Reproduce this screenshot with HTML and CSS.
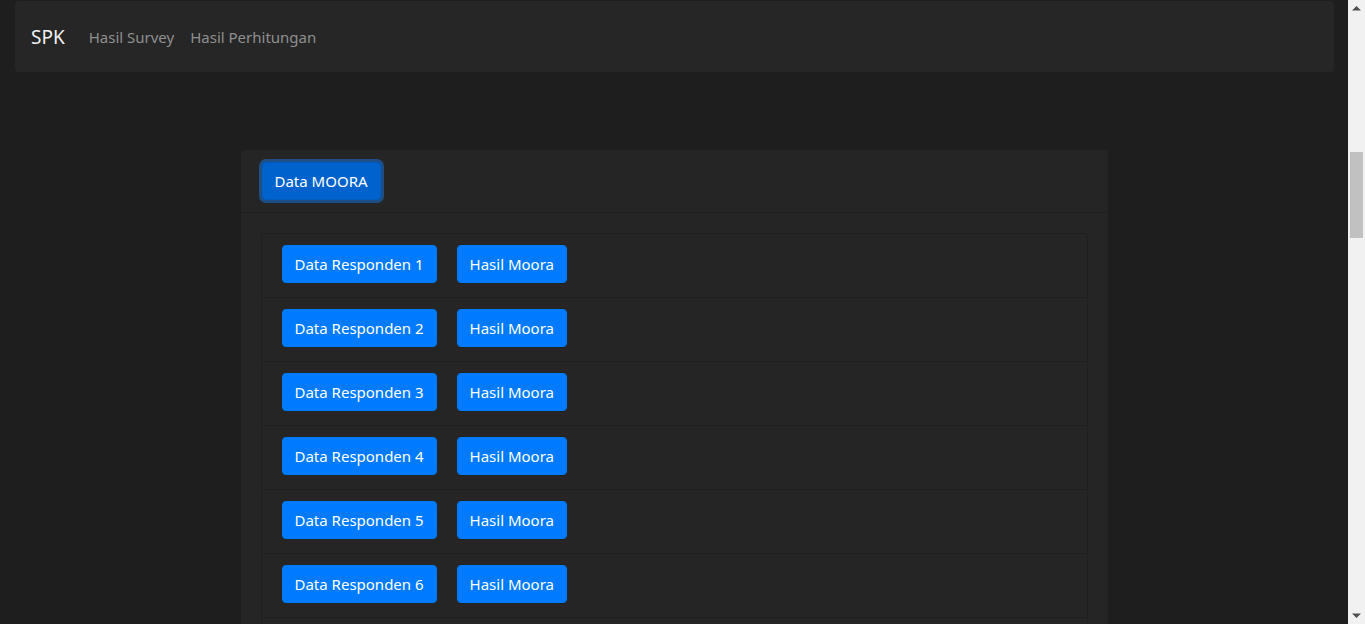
FILE: index.html
```html
<!DOCTYPE html>
<html lang="id">
<head>
<meta charset="utf-8">
<title>SPK</title>
<link rel="stylesheet" href="styles.css">
</head>
<body>
<nav class="navbar">
  <a class="brand" href="#">SPK</a>
  <a class="nav-link" href="#">Hasil Survey</a>
  <a class="nav-link" href="#">Hasil Perhitungan</a>
</nav>
<main class="main">
  <section class="card">
    <div class="card-header">
      <button class="btn btn-active">Data MOORA</button>
    </div>
    <div class="card-body">
      <ul class="list">
        <li class="item"><button class="btn">Data Responden 1</button><button class="btn">Hasil Moora</button></li>
        <li class="item"><button class="btn">Data Responden 2</button><button class="btn">Hasil Moora</button></li>
        <li class="item"><button class="btn">Data Responden 3</button><button class="btn">Hasil Moora</button></li>
        <li class="item"><button class="btn">Data Responden 4</button><button class="btn">Hasil Moora</button></li>
        <li class="item"><button class="btn">Data Responden 5</button><button class="btn">Hasil Moora</button></li>
        <li class="item"><button class="btn">Data Responden 6</button><button class="btn">Hasil Moora</button></li>
        <li class="item"><button class="btn">Data Responden 7</button><button class="btn">Hasil Moora</button></li>
        <li class="item"><button class="btn">Data Responden 8</button><button class="btn">Hasil Moora</button></li>
      </ul>
    </div>
  </section>
</main>
<div class="scrollbar" aria-hidden="true">
  <svg class="arrow" width="17" height="17" viewBox="0 0 17 17"><polygon points="8.5,6 13,10.5 4,10.5" fill="#505050"/></svg>
  <div class="track"><div class="thumb"></div></div>
  <svg class="arrow" width="17" height="17" viewBox="0 0 17 17"><polygon points="4,6.5 13,6.5 8.5,11" fill="#505050"/></svg>
</div>
</body>
</html>
```
FILE: styles.css
```css
html, body {
  margin: 0;
  padding: 0;
  background: #1e1e1e;
  font-family: "Noto Sans", "Open Sans", sans-serif;
  color: #e6e6e6;
}

html {
  overflow: hidden;
}

body {
  margin-right: 17px;
}

.scrollbar {
  position: fixed;
  top: 0;
  right: 0;
  bottom: 0;
  width: 17px;
  background: #f1f1f1;
  display: flex;
  flex-direction: column;
}

.arrow {
  display: block;
  flex: none;
}

.track {
  flex: 1;
}

.thumb {
  margin: 135px 2px 0;
  height: 86px;
  background: #c1c1c1;
}

.navbar {
  margin: 1px 14px 0 15px;
  height: 71px;
  box-sizing: border-box;
  padding: 0 16px;
  background: #262626;
  border-radius: 4px;
  display: flex;
  align-items: center;
}

.brand {
  color: #f2f2f2;
  font-size: 19px;
  text-decoration: none;
  margin-right: 16px;
}

.nav-link {
  color: #8f8f8f;
  font-size: 15px;
  text-decoration: none;
  padding: 0 8px;
}

.main {
  padding-top: 78px;
  padding-bottom: 40px;
}

.card {
  width: 867px;
  margin: 0 auto;
  background: #252525;
  border-radius: 4px;
}

.card-header {
  padding: 12px 20px 12px 21px;
  border-bottom: 1px solid #1f1f1f;
  display: flex;
}

.card-body {
  padding: 20px;
}

.list {
  list-style: none;
  margin: 0;
  padding: 0;
}

.item {
  display: flex;
  gap: 20px;
  padding: 11px 20px 14px;
  border: 1px solid #1f1f1f;
  margin-top: -1px;
}

.item:first-child {
  margin-top: 0;
  border-radius: 3px 3px 0 0;
}

.btn {
  font-family: inherit;
  font-size: 15px;
  line-height: 22px;
  color: #fff;
  background: #007bff;
  border: 1px solid #007bff;
  border-radius: 4px;
  padding: 7px 12px;
  cursor: pointer;
}

.btn-active {
  background: #0062cc;
  border-color: #005cbf;
  box-shadow: 0 0 0 3px #1d4f86;
}
```
